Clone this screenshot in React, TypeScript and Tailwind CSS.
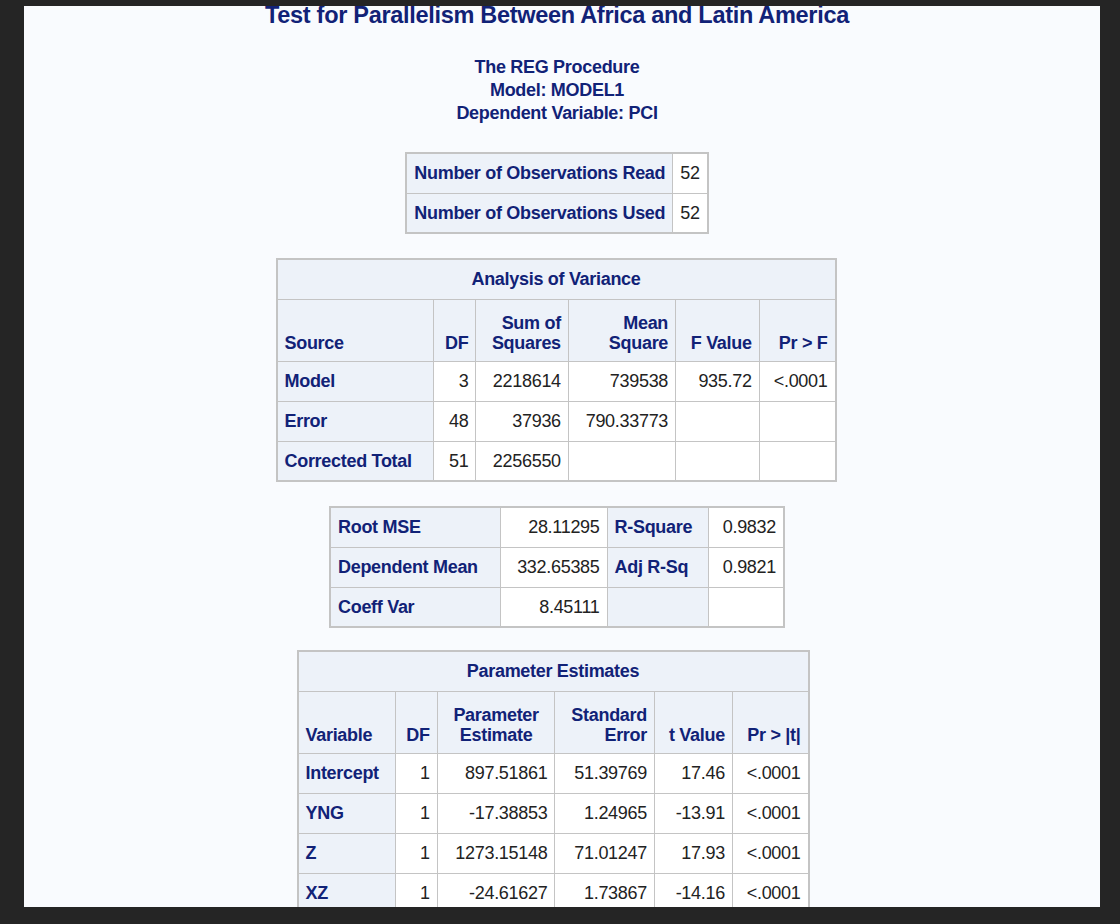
const H = "bg-[#edf2f9] text-[#112277] font-bold";
const C = "border border-[#c4c4c4] px-[7px] h-[40px]";

type Cell = { t: string; h?: boolean; r?: boolean; cls?: string };

function Table({ rows, cls = "" }: { rows: Cell[][]; cls?: string }) {
  return (
    <table className={`border-collapse border-2 border-[#c4c4c4] bg-white mx-auto ${cls}`}>
      <tbody>
        {rows.map((row, i) => (
          <tr key={i}>
            {row.map((c, j) => (
              <td
                key={j}
                className={`${C} ${c.h ? H : "text-[#222]"} ${c.r ? "text-right" : "text-left"} ${c.cls ?? ""}`}
              >
                {c.t}
              </td>
            ))}
          </tr>
        ))}
      </tbody>
    </table>
  );
}

const h = (t: string, r = false, cls = ""): Cell => ({ t, h: true, r, cls });
const d = (t: string, cls = ""): Cell => ({ t, r: true, cls });

export default function App() {
  return (
    <div className="h-[924px] bg-[#252525] pt-[6px] pl-[24px] pr-[20px]" style={{ fontFamily: '"Liberation Sans", Arial, sans-serif' }}>
      <div className="h-[901px] bg-[#f9fbfe] overflow-hidden text-[18px] leading-[20px] tracking-[-0.3px]">
        <div className="text-center text-[#112277] font-bold text-[23.5px] leading-[24px] mt-[-3px] pr-[10px]">
          Test for Parallelism Between Africa and Latin America
        </div>
        <div className="text-center text-[#112277] font-bold text-[18px] leading-[23px] mt-[29px] pr-[10px]">
          <div>The REG Procedure</div>
          <div>Model: MODEL1</div>
          <div>Dependent Variable: PCI</div>
        </div>
        <div className="mt-[27px] pr-[10px]">
          <Table rows={[[h("Number of Observations Read"), d("52")], [h("Number of Observations Used"), d("52")]]} />
        </div>
        <div className="mt-[24px] pr-[12px]">
          <table className="border-collapse border-2 border-[#c4c4c4] bg-white mx-auto w-[561px]">
            <tbody>
              <tr><td colSpan={6} className={`${C} ${H} text-center`}>Analysis of Variance</td></tr>
              <tr className="align-bottom">
                <td className={`${C} ${H} pb-[8px]`}>Source</td>
                <td className={`${C} ${H} text-right pb-[8px]`}>DF</td>
                <td className={`${C} ${H} text-right pb-[8px] h-[62px]`}>Sum of<br />Squares</td>
                <td className={`${C} ${H} text-right pb-[8px]`}>Mean<br />Square</td>
                <td className={`${C} ${H} text-right pb-[8px]`}>F Value</td>
                <td className={`${C} ${H} text-right pb-[8px]`}>Pr &gt; F</td>
              </tr>
              {[
                ["Model", "3", "2218614", "739538", "935.72", "<.0001"],
                ["Error", "48", "37936", "790.33773", "", ""],
                ["Corrected Total", "51", "2256550", "", "", ""],
              ].map((r) => (
                <tr key={r[0]}>
                  <td className={`${C} ${H}`}>{r[0]}</td>
                  {r.slice(1).map((v, i) => (
                    <td key={i} className={`${C} text-right text-[#222]`}>{v}</td>
                  ))}
                </tr>
              ))}
            </tbody>
          </table>
        </div>
        <div className="mt-[24px] pr-[10px]">
          <Table
            cls="w-[456px]"
            rows={[
              [h("Root MSE"), d("28.11295"), h("R-Square"), d("0.9832", "text-left")],
              [h("Dependent Mean"), d("332.65385"), h("Adj R-Sq"), d("0.9821", "text-left")],
              [h("Coeff Var"), d("8.45111"), h(""), d("")],
            ]}
          />
        </div>
        <div className="mt-[22px] pr-[18px]">
          <table className="border-collapse border-2 border-[#c4c4c4] bg-white mx-auto w-[513px]">
            <tbody>
              <tr><td colSpan={6} className={`${C} ${H} text-center`}>Parameter Estimates</td></tr>
              <tr className="align-bottom">
                <td className={`${C} ${H} pb-[8px] h-[62px]`}>Variable</td>
                <td className={`${C} ${H} pb-[8px] text-right`}>DF</td>
                <td className={`${C} ${H} pb-[8px] text-center`}>Parameter<br />Estimate</td>
                <td className={`${C} ${H} pb-[8px] text-right`}>Standard<br />Error</td>
                <td className={`${C} ${H} pb-[8px] text-right`}>t Value</td>
                <td className={`${C} ${H} pb-[8px] text-right`}>Pr &gt; |t|</td>
              </tr>
              {[
                ["Intercept", "1", "897.51861", "51.39769", "17.46", "<.0001"],
                ["YNG", "1", "-17.38853", "1.24965", "-13.91", "<.0001"],
                ["Z", "1", "1273.15148", "71.01247", "17.93", "<.0001"],
                ["XZ", "1", "-24.61627", "1.73867", "-14.16", "<.0001"],
              ].map((r) => (
                <tr key={r[0]}>
                  <td className={`${C} ${H}`}>{r[0]}</td>
                  {r.slice(1).map((v, i) => (
                    <td key={i} className={`${C} text-right text-[#222]`}>{v}</td>
                  ))}
                </tr>
              ))}
            </tbody>
          </table>
        </div>
      </div>
    </div>
  );
}
